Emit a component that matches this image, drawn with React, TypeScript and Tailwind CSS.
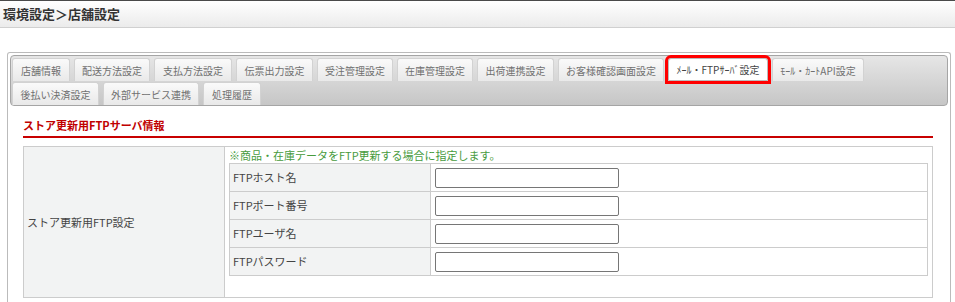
const font = { fontFamily: '"Noto Sans CJK JP", "Noto Sans", sans-serif' };

const row1 = [
    { label: '店舗情報', w: 'w-[58px]' },
    { label: '配送方法設定', w: 'w-[76px]' },
    { label: '支払方法設定', w: 'w-[78px]' },
    { label: '伝票出力設定', w: 'w-[77px]' },
    { label: '受注管理設定', w: 'w-[76px]' },
    { label: '在庫管理設定', w: 'w-[76px]' },
    { label: '出荷連携設定', w: 'w-[77px]' },
    { label: 'お客様確認画面設定', w: 'w-[106px]' },
    { label: 'ﾒｰﾙ・FTPｻｰﾊﾞ設定', w: 'w-[100px]', active: true },
    { label: 'ﾓｰﾙ・ｶｰﾄAPI設定', w: 'w-[92px]' },
];

const row2 = [
    { label: '後払い決済設定', w: 'w-[87px]' },
    { label: '外部サービス連携', w: 'w-[96px]' },
    { label: '処理履歴', w: 'w-[58px]' },
];

const fields = ['FTPホスト名', 'FTPポート番号', 'FTPユーザ名', 'FTPパスワード'];

type Tab = { label: string; w: string; active?: boolean };

const TabItem = ({ tab }: { tab: Tab }) => (
    <div
        className={
            tab.active
                ? `${tab.w} h-[23px] flex items-center justify-center rounded-t-[3px] border border-[#bbb] bg-white text-[10px] text-[#444] outline-[3px] outline-solid outline-[#f00]`
                : `${tab.w} h-[23px] flex items-center justify-center rounded-t-[3px] border border-[#d2d2d2] border-b-0 bg-gradient-to-b from-[#fafafa] to-[#e9e9e9] text-[10px] text-[#707070]`
        }
    >
        {tab.label}
    </div>
);

export default function App() {
    return (
        <div className="w-[955px] h-[302px] overflow-hidden bg-white" style={font}>
            {/* page header */}
            <div className="border-t border-[#4a4a4a] h-[28px] border-b border-b-[#d0d0d0] bg-gradient-to-b from-white to-[#ebebeb] pl-[3px] text-[13px] font-bold leading-[26px] text-[#333]">
                環境設定＞店舗設定
            </div>

            <div className="ml-[7px] mt-[24px] w-[944px] h-[260px] rounded-[3px] border border-[#bbb] border-b-0 p-[2px]">
                {/* tab bar */}
                <div className="rounded-[4px] border border-[#a5a5a5] bg-gradient-to-b from-[#e6e6e6] to-[#c6c6c6] pl-[1px] pt-[2px]">
                    <div className="flex gap-[4px]">
                        {row1.map((t) => (
                            <TabItem key={t.label} tab={t} />
                        ))}
                    </div>
                    <div className="mt-[1px] flex gap-[4px]">
                        {row2.map((t) => (
                            <TabItem key={t.label} tab={t} />
                        ))}
                    </div>
                </div>

                <div className="ml-[13px] w-[910px]">
                    <div className="pt-[11px] pb-[3px] border-b-2 border-[#c80000] text-[11px] font-bold leading-[16px] text-[#c00000]">
                        ストア更新用FTPサーバ情報
                    </div>

                    <div className="mt-[8px] flex border border-[#ccc]">
                        <div className="w-[201px] flex items-center border-r border-[#ccc] bg-[#f2f3f3] pl-[3px] text-[11px] text-[#444]">
                            ストア更新用FTP設定
                        </div>
                        <div className="flex-1 pl-[4px] pr-[4px] pb-[21px]">
                            <div className="h-[16px] text-[11px] leading-[16px] text-[#479b3d]">
                                ※商品・在庫データをFTP更新する場合に指定します。
                            </div>
                            <div className="border border-[#ccc] border-b-0">
                                {fields.map((f) => (
                                    <div key={f} className="flex h-[28px] border-b border-[#ccc]">
                                        <div className="w-[201px] flex items-center border-r border-[#ccc] bg-[#f2f3f3] pl-[3px] text-[11px] text-[#444]">
                                            {f}
                                        </div>
                                        <div className="flex items-center pl-[4px]">
                                            <input
                                                type="text"
                                                className="h-[20px] w-[184px] rounded-[2px] border border-[#767676] bg-white"
                                            />
                                        </div>
                                    </div>
                                ))}
                            </div>
                        </div>
                    </div>
                </div>
            </div>
        </div>
    );
}
